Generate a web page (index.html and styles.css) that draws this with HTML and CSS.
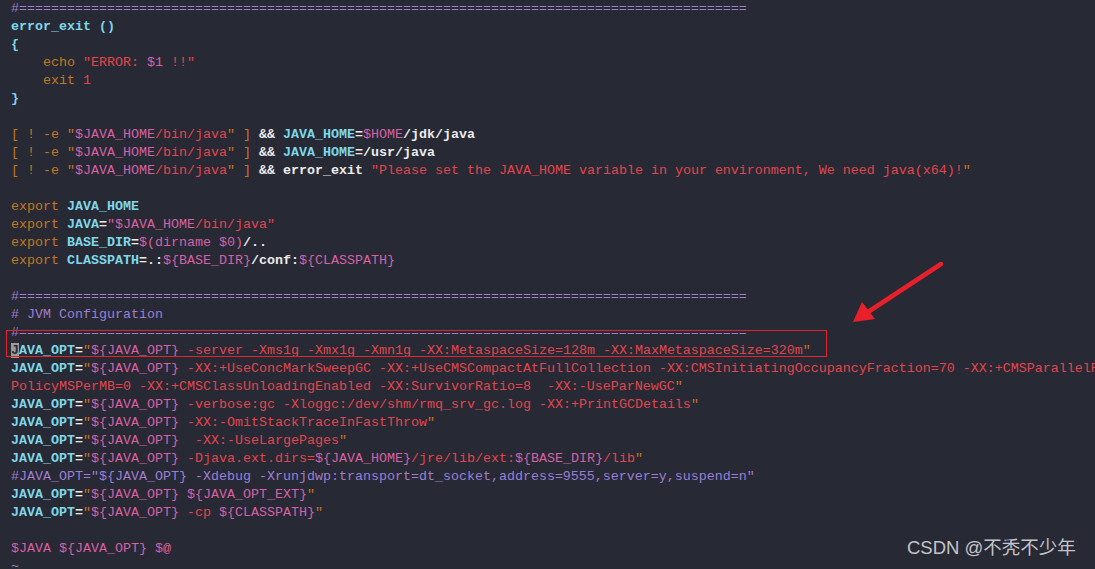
FILE: index.html
```html
<!DOCTYPE html>
<html>
<head>
<meta charset="utf-8">
<link rel="stylesheet" href="styles.css">
</head>
<body>
<div class="term">
<pre class="code"><span class="c">#===========================================================================================</span>
<span class="f">error_exit ()</span>
<span class="f">{</span>
    <span class="o">echo</span> <span class="r">"ERROR: </span><span class="p">$1</span><span class="r"> !!"</span>
    <span class="o">exit</span> <span class="r">1</span>
<span class="f">}</span>

<span class="o">[ ! -e "</span><span class="p">$JAVA_HOME</span><span class="r">/bin/java</span><span class="o">" ]</span> <span class="w">&amp;&amp;</span> <span class="f">JAVA_HOME</span><span class="w">=</span><span class="p">$HOME</span><span class="w">/jdk/java</span>
<span class="o">[ ! -e "</span><span class="p">$JAVA_HOME</span><span class="r">/bin/java</span><span class="o">" ]</span> <span class="w">&amp;&amp;</span> <span class="f">JAVA_HOME</span><span class="w">=/usr/java</span>
<span class="o">[ ! -e "</span><span class="p">$JAVA_HOME</span><span class="r">/bin/java</span><span class="o">" ]</span> <span class="w">&amp;&amp; error_exit</span> <span class="r">"Please set the JAVA_HOME variable in your environment, We need java(x64)!</span><span class="o">"</span>

<span class="o">export</span> <span class="f">JAVA_HOME</span>
<span class="o">export</span> <span class="f">JAVA</span><span class="w">=</span><span class="p">"$JAVA_HOME</span><span class="r">/bin/java"</span>
<span class="o">export</span> <span class="f">BASE_DIR</span><span class="w">=</span><span class="p">$(dirname $0)</span><span class="w">/..</span>
<span class="o">export</span> <span class="f">CLASSPATH</span><span class="w">=.:</span><span class="p">${BASE_DIR}</span><span class="w">/conf:</span><span class="p">${CLASSPATH}</span>

<span class="c">#===========================================================================================</span>
<span class="c"># JVM Configuration</span>
<span class="c">#===========================================================================================</span>
<span class="f"><span class="cur">J</span>AVA_OPT</span><span class="w">=</span><span class="o">"</span><span class="p">${JAVA_OPT}</span> <span class="r">-server -Xms1g -Xmx1g -Xmn1g -XX:MetaspaceSize=128m -XX:MaxMetaspaceSize=320m</span><span class="o">"</span>
<span class="f">JAVA_OPT</span><span class="w">=</span><span class="o">"</span><span class="p">${JAVA_OPT}</span> <span class="r">-XX:+UseConcMarkSweepGC -XX:+UseCMSCompactAtFullCollection -XX:CMSInitiatingOccupancyFraction=70 -XX:+CMSParallelR</span>
<span class="r">PolicyMSPerMB=0 -XX:+CMSClassUnloadingEnabled -XX:SurvivorRatio=8  -XX:-UseParNewGC</span><span class="o">"</span>
<span class="f">JAVA_OPT</span><span class="w">=</span><span class="o">"</span><span class="p">${JAVA_OPT}</span> <span class="r">-verbose:gc -Xloggc:/dev/shm/rmq_srv_gc.log -XX:+PrintGCDetails</span><span class="o">"</span>
<span class="f">JAVA_OPT</span><span class="w">=</span><span class="o">"</span><span class="p">${JAVA_OPT}</span> <span class="r">-XX:-OmitStackTraceInFastThrow</span><span class="o">"</span>
<span class="f">JAVA_OPT</span><span class="w">=</span><span class="o">"</span><span class="p">${JAVA_OPT}</span>  <span class="r">-XX:-UseLargePages</span><span class="o">"</span>
<span class="f">JAVA_OPT</span><span class="w">=</span><span class="o">"</span><span class="p">${JAVA_OPT}</span> <span class="r">-Djava.ext.dirs=</span><span class="p">${JAVA_HOME}</span><span class="r">/jre/lib/ext:</span><span class="p">${BASE_DIR}</span><span class="r">/lib</span><span class="o">"</span>
<span class="c">#JAVA_OPT="${JAVA_OPT} -Xdebug -Xrunjdwp:transport=dt_socket,address=9555,server=y,suspend=n"</span>
<span class="f">JAVA_OPT</span><span class="w">=</span><span class="o">"</span><span class="p">${JAVA_OPT}</span> <span class="p">${JAVA_OPT_EXT}</span><span class="o">"</span>
<span class="f">JAVA_OPT</span><span class="w">=</span><span class="o">"</span><span class="p">${JAVA_OPT}</span> <span class="r">-cp</span> <span class="p">${CLASSPATH}</span><span class="o">"</span>

<span class="p">$JAVA ${JAVA_OPT} $@</span>
<span class="tilde">~</span></pre>
<div class="box"></div>
<svg class="arrow" width="1095" height="569" viewBox="0 0 1095 569">
  <line x1="941" y1="264" x2="868" y2="312" stroke="#e8202a" stroke-width="4.5" stroke-linecap="round"/>
  <polygon points="853,322 862,302 875,319" fill="#e8202a"/>
</svg>
<div class="mark">CSDN @不秃不少年</div>
</div>
</body>
</html>
```
FILE: styles.css
```css
html, body {
  margin: 0;
  padding: 0;
  background: #272935;
  overflow: hidden;
}
.term {
  position: relative;
  width: 1095px;
  height: 569px;
  overflow: hidden;
  background: #272935;
}
.code {
  margin: 0;
  padding: 0 0 0 11px;
  font-family: "Liberation Mono", "DejaVu Sans Mono", monospace;
  font-size: 13.33px;
  line-height: 18px;
  color: #e6e6e6;
  white-space: pre;
}
.c { color: #9d7fd2; }
.f { color: #7fd7ea; font-weight: bold; }
.w { color: #ececec; font-weight: bold; }
.o { color: #c27822; }
.r { color: #e2464c; }
.p { color: #d562a4; }
.tilde { color: #9d7fd2; }
.cur {
  background: #9a9a9a;
  color: #2a2c38;
}
.box {
  position: absolute;
  left: 6px;
  top: 330px;
  width: 819px;
  height: 25px;
  border: 1px solid #e0252c;
}
.arrow {
  position: absolute;
  left: 0;
  top: 0;
}
.mark {
  position: absolute;
  left: 907px;
  top: 536px;
  font-family: "Liberation Sans", "Noto Sans CJK SC", sans-serif;
  font-size: 18.5px;
  color: #c4c4c8;
  line-height: 24px;
}
```
